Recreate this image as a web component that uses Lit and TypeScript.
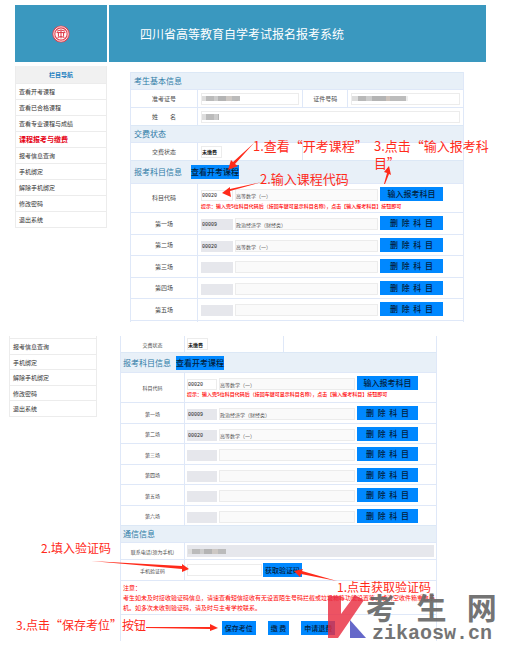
import { LitElement, html, css, nothing } from "lit";
import { customElement } from "lit/decorators.js";

interface Slot {
  label: string;
  code: string;
  name: string;
}

const NAV = [
  "查看开考课程",
  "查看已合格课程",
  "查看专业课程与成绩",
  "课程报考与缴费",
  "报考信息查询",
  "手机绑定",
  "解除手机绑定",
  "修改密码",
  "退出系统",
];

const SLOTS: Slot[] = [
  { label: "第一场", code: "00009", name: "政治经济学（财经类）" },
  { label: "第二场", code: "00020", name: "高等数学（一）" },
  { label: "第三场", code: "", name: "" },
  { label: "第四场", code: "", name: "" },
  { label: "第五场", code: "", name: "" },
  { label: "第六场", code: "", name: "" },
];

const DELETE_LABEL = "删\u00a0\u00a0除\u00a0\u00a0科\u00a0\u00a0目";

@customElement("app-root")
export class AppRoot extends LitElement {
  static styles = css`
    :host {
      display: block;
      background: #fff;
      color: #333;
      font-family: "Noto Sans CJK SC", "Noto Sans", sans-serif;
      font-size: 6px;
      line-height: 1;
    }
    * {
      box-sizing: border-box;
    }
    h1, h2, p, ul {
      margin: 0;
      padding: 0;
    }
    input, button {
      font: inherit;
      margin: 0;
      min-width: 0;
      border-radius: 0;
    }
    a {
      color: inherit;
      text-decoration: none;
    }

    .capture {
      position: relative;
    }
    .first {
      --label: 67px;
      --side: 45px;
      --code: 32px;
      --button: 63px;
      --pad: 3px;
      --end: 20px;
      padding: 5px 23px 0 15px;
    }
    .second {
      --label: 64px;
      --side: 43px;
      --code: 30px;
      --button: 61px;
      --pad: 2px;
      --end: 18px;
      margin-top: 14px;
      padding: 0 72px 12px 9px;
      font-size: 5px;
    }

    .banner {
      display: grid;
      grid-template-columns: 92px 1fr;
      gap: 2px;
      height: 57px;
    }
    .brand, .title {
      display: flex;
      align-items: center;
      background: #3a98bf;
    }
    .brand {
      justify-content: center;
    }
    .logo {
      width: 18px;
      height: 18px;
    }
    .title {
      padding-left: 31px;
      color: #fff;
      font-size: 12px;
      font-weight: 400;
    }

    .body {
      display: grid;
      grid-template-columns: 92px 1fr;
      column-gap: 23px;
      margin-top: 4px;
      padding-right: 22px;
      align-items: start;
    }
    .second .body {
      grid-template-columns: 88px 1fr;
      margin-top: 0;
      padding-right: 0;
    }
    .first .form {
      margin-top: 6px;
    }

    .nav {
      border: 1px solid #ececec;
      border-top: 0;
      font-size: 6px;
    }
    .nav ul {
      list-style: none;
    }
    .nav-head {
      height: 17px;
      line-height: 17px;
      background: #f1f1f1;
      color: #1c7fc0;
      font-size: 6px;
      font-weight: 700;
      text-align: center;
    }
    .nav li {
      height: 16px;
      line-height: 15px;
      padding-left: 3px;
      border-top: 1px solid #ececec;
    }
    .second .nav {
      padding-top: 2px;
    }
    .second .nav li:nth-child(even) {
      height: 15px;
    }
    .nav .current {
      color: #e60012;
      font-size: 7px;
      font-weight: 700;
    }

    .form {
      border: 1px solid #dfe8f8;
      border-width: 0 1px;
    }
    .section {
      display: flex;
      align-items: center;
      gap: 9px;
      height: 17px;
      padding-left: 3px;
      background: #e8f0f8;
      border-top: 1px solid #dce8f6;
      color: #2d7aa6;
    }
    .section h2 {
      font-size: 8px;
      font-weight: 400;
    }
    .second .section {
      padding-left: 2px;
    }
    .section.tall {
      height: 23px;
    }
    .second .section.tall {
      height: 20px;
      gap: 5px;
    }
    .row {
      display: grid;
      grid-template-columns: var(--label) 1fr;
      height: 18px;
      border-top: 1px solid #dfe8f8;
    }
    .row.split {
      grid-template-columns: var(--label) 11fr var(--side) 12fr;
    }
    .row > * {
      border-right: 1px solid #dfe8f8;
      min-width: 0;
    }
    .row > :last-child {
      border-right: 0;
    }
    .row > label {
      display: flex;
      align-items: center;
      justify-content: center;
      color: #4a4a4a;
    }
    .second .status {
      height: 16px;
      border-top: 0;
    }
    .entry {
      height: 29px;
    }
    .second .entry {
      height: 30px;
    }
    .slots .row {
      height: 22px;
    }
    .slots .row:nth-child(even), .second .slots .row {
      height: 21px;
    }
    .second .slots .row:nth-child(even) {
      height: 20px;
    }
    .stub {
      height: 2px;
    }
    .field {
      display: flex;
      align-items: center;
      padding: 0 var(--pad);
    }
    .box {
      width: 100%;
      height: 12px;
      padding: 0;
      border: 1px solid #ececec;
      background: #fff;
      color: #222;
      font-size: 5px;
      line-height: 10px;
      outline: 0;
    }
    .paid {
      width: 21px;
      font-weight: 700;
    }
    .masked {
      background-image: linear-gradient(90deg, #ddd 0 4px, #bbb 4px 12px, #ccc 12px 16px, #b4b4b4 16px 24px, #cdc8c4 24px 30px, #bbb 30px 38px, #eee 38px);
      background-repeat: no-repeat;
      background-position: 0 center;
      background-size: 38px 5px;
    }
    .masked.long {
      background-image: linear-gradient(90deg, #ddd 0 6px, #b8b8b8 6px 14px, #ccc 14px 20px, #b4b4b4 20px 34px, #cdc3bc 34px 38px, #bcbcbc 38px 54px, #eee 54px);
      background-size: 56px 5px;
    }
    .masked.short {
      background-size: 17px 6px;
    }
    .course {
      display: grid;
      grid-template-columns: var(--code) 1fr var(--button);
      column-gap: 2px;
      align-items: end;
      align-content: start;
      padding: 3px var(--end) 0 var(--pad);
    }
    .code {
      height: 11px;
      font-family: "Liberation Mono", monospace;
    }
    .name {
      background: #fafafa;
      color: #555;
    }
    .locked {
      background-color: #e6e7ec;
      border-color: #e6e7ec;
    }
    .hint {
      grid-column: 1 / -1;
      padding-top: 1px;
      color: #f00;
      font-size: 5px;
      font-weight: 500;
      line-height: 8px;
      white-space: nowrap;
    }
    .second .hint {
      padding-top: 0;
    }
    .button {
      height: 14px;
      padding: 0;
      border: 0;
      background: #0088ff;
      color: #02203c;
      font-size: 8px;
      font-weight: 500;
      line-height: 14px;
      text-align: center;
      white-space: nowrap;
    }
    .phone {
      height: 17px;
    }
    .verify {
      height: 21px;
    }
    .verify .field {
      gap: 1px;
    }
    .verify .box {
      width: 75px;
    }
    .small {
      padding: 0 2px;
      font-size: 7px;
    }
    .notice {
      height: 34px;
      padding: 2px 0 0 2px;
      border-top: 1px solid #dfe8f8;
      color: #f00;
      font-size: 6px;
      line-height: 10px;
    }
    .actions {
      display: flex;
      align-items: center;
      justify-content: center;
      gap: 12px;
      height: 27px;
      border-top: 1px solid #dfe8f8;
    }
    .actions .button {
      padding: 0 3px;
    }

    /* Callouts drawn over the two captures */
    .arrows {
      position: absolute;
      left: 0;
      top: 0;
      width: 1px;
      height: 1px;
      overflow: visible;
      fill: #ff2a1a;
      pointer-events: none;
    }
    .note {
      position: absolute;
      color: #ff2a1a;
      font-size: 12px;
      line-height: 16px;
      white-space: nowrap;
    }
    .first .note {
      font-size: 13px;
      line-height: 17px;
    }
    .open { left: 253px; top: 137px; }
    .type { left: 260px; top: 170px; }
    .enter { left: 374px; top: 137px; }
    .fill { left: 41px; top: 204px; }
    .fetch { left: 337px; top: 243px; }
    .save { left: 16px; top: 281px; }

    .site {
      position: absolute;
      left: 328px;
      top: 256px;
      display: flex;
      color: #666;
      opacity: 0.9;
      pointer-events: none;
    }
    .mark {
      width: 38px;
      height: 48px;
      flex: none;
    }
    .site-name {
      font-size: 30px;
      font-weight: 700;
      line-height: 28px;
      white-space: nowrap;
    }
    .site-url {
      padding: 4px 0 0 6px;
      font-family: "Liberation Mono", monospace;
      font-size: 20px;
      font-weight: 700;
      line-height: 20px;
    }
  `;

  private nav(items: string[], heading: boolean) {
    return html`<nav class="nav">
      ${heading ? html`<h2 class="nav-head">栏目导航</h2>` : nothing}
      <ul>
        ${items.map(
          (t) => html`<li class=${t === "课程报考与缴费" ? "current" : ""}><a href="#">${t}</a></li>`
        )}
      </ul>
    </nav>`;
  }

  private status(id: string) {
    return html`<div class="row split status">
      <label for="${id}-paid">交费状态</label>
      <div class="field"><input class="box paid" id="${id}-paid" .value=${"未缴费"} readonly /></div>
      <span></span>
    </div>`;
  }

  private courses(id: string, slots: Slot[]) {
    return html`
      <div class="section tall">
        <h2>报考科目信息</h2>
        <button class="button">查看开考课程</button>
      </div>
      <div class="row entry">
        <label for="${id}-code">科目代码</label>
        <div class="course">
          <input class="box code" id="${id}-code" .value=${"00020"} />
          <input class="box name" aria-label="科目名称" .value=${"高等数学（一）"} readonly />
          <button class="button">输入报考科目</button>
          <p class="hint">提示：输入完5位科目代码后（按回车键可显示科目名称），点击【输入报考科目】按钮即可</p>
        </div>
      </div>
      <div class="slots">
        ${slots.map(
          (s, i) => html`<div class="row">
            <label for="${id}-slot${i}">${s.label}</label>
            <div class="course">
              <input class="box code locked" id="${id}-slot${i}" .value=${s.code} readonly />
              <input class="box name" aria-label="${s.label}科目名称" .value=${s.name} readonly />
              <button class="button">${DELETE_LABEL}</button>
            </div>
          </div>`
        )}
      </div>
    `;
  }

  render() {
    return html`
      <section class="capture first">
        <header class="banner">
          <div class="brand">
            <svg class="logo" viewBox="0 0 18 18" aria-hidden="true">
              <circle cx="9" cy="9" r="8.6" fill="#e2404e" />
              <circle cx="9" cy="9" r="7.2" fill="none" stroke="#fbe3e5" stroke-width="1" />
              <circle cx="9" cy="9" r="5.6" fill="#fff" />
              <path d="M5 6.2Q9 3.6 13 6.2M4.6 7.6H13.4M9 5V13.4M6.4 8V11.6M11.6 8V11.6M5.6 12.4Q9 10.8 12.4 12.4" fill="none" stroke="#dc3342" stroke-width="1" />
            </svg>
          </div>
          <h1 class="title">四川省高等教育自学考试报名报考系统</h1>
        </header>
        <div class="body">
          ${this.nav(NAV, true)}
          <form class="form" @submit=${(e: Event) => e.preventDefault()}>
            <div class="section"><h2>考生基本信息</h2></div>
            <div class="row split">
              <label for="ticket">准考证号</label>
              <div class="field"><input class="box masked" id="ticket" /></div>
              <label for="idcard">证件号码</label>
              <div class="field"><input class="box masked long" id="idcard" /></div>
            </div>
            <div class="row">
              <label for="person">姓&emsp;&emsp;名</label>
              <div class="field"><input class="box masked short" id="person" /></div>
            </div>
            <div class="section"><h2>交费状态</h2></div>
            ${this.status("a")} ${this.courses("a", SLOTS.slice(0, 5))}
            <div class="row stub"><span></span><span></span></div>
          </form>
        </div>
        <svg class="arrows" aria-hidden="true">
          <path d="M254 143L235 164L238 166L228 170L231 160L233 162Z" />
          <path d="M262 182L230 191L231 197L222 193L230 187L230 189Z" />
          <path d="M384 184L387 173L384 172L389 166L391 175L389 174L385 184Z" />
        </svg>
        <div class="note open">1.查看“开考课程”</div>
        <div class="note type">2.输入课程代码</div>
        <div class="note enter">3.点击“输入报考科<br />目”</div>
      </section>

      <section class="capture second">
        <div class="body">
          ${this.nav(NAV.slice(4), false)}
          <form class="form" @submit=${(e: Event) => e.preventDefault()}>
            ${this.status("b")} ${this.courses("b", SLOTS)}
            <div class="section"><h2>通信信息</h2></div>
            <div class="row phone">
              <label for="phone">联系电话(须为手机)</label>
              <div class="field"><input class="box locked masked" id="phone" /></div>
            </div>
            <div class="row verify">
              <label for="verify">手机验证码</label>
              <div class="field">
                <input class="box" id="verify" />
                <button class="button small">获取验证码</button>
              </div>
            </div>
            <div class="notice">
              <p>注意：</p>
              <p>考生如未及时接收验证码信息，请速查看短信接收有无设置陌生号码拦截或垃圾箱等功能设置等，或清空收件箱重启手机。如多次未收到验证码，请及时与主考学校联系。</p>
            </div>
            <div class="actions">
              <button class="button small">保存考位</button>
              <button class="button small">缴 费</button>
              <button class="button small">申请退费</button>
            </div>
          </form>
        </div>
        <svg class="arrows" aria-hidden="true">
          <path d="M91 225L182 230L182 228L189 233L182 236L182 233Z" />
          <path d="M337 245L301 238L300 241L294 235L303 233L302 235Z" />
          <path d="M146 291L210 291L210 288L218 292L210 295L210 293L146 292Z" />
        </svg>
        <div class="note fill">2.填入验证码</div>
        <div class="note fetch">1.点击获取验证码</div>
        <div class="note save">3.点击“保存考位”按钮</div>
        <div class="site">
          <svg class="mark" viewBox="0 0 38 48" aria-hidden="true">
            <path d="M0 4H13V22L27 3L36 8L10 46H0Z" fill="#ea2c40" fill-opacity="0.9" />
            <path d="M22 28L38 46H22Z" fill="#5558c4" />
          </svg>
          <div>
            <div class="site-name">考&nbsp;&nbsp;&nbsp;生&nbsp;&nbsp;&nbsp;网</div>
            <div class="site-url">zikaosw.cn</div>
          </div>
        </div>
      </section>
    `;
  }
}
